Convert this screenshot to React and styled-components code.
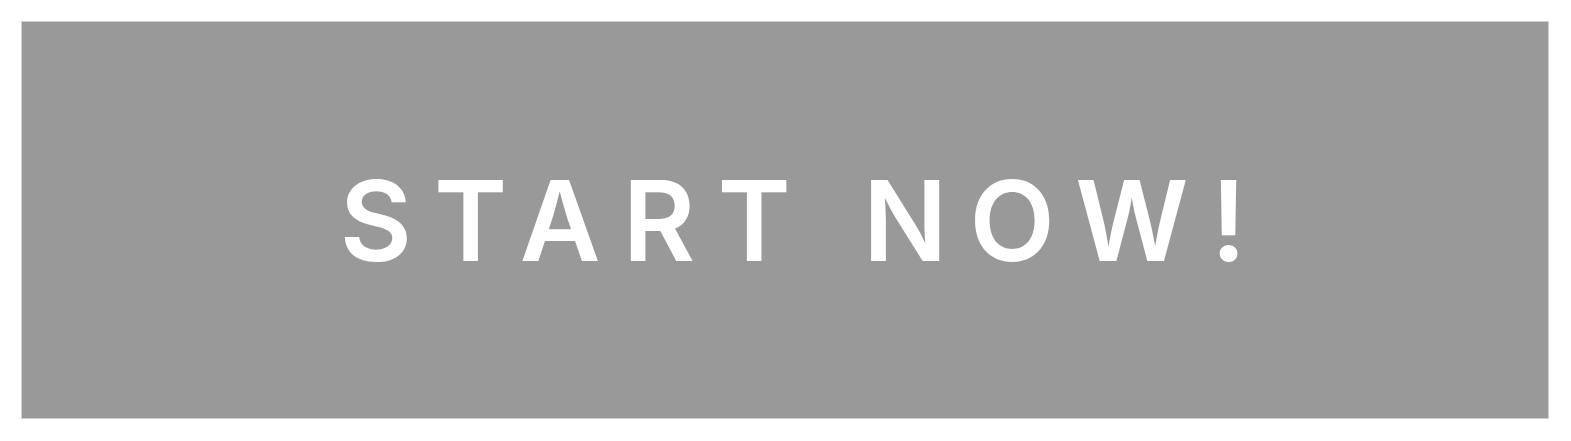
import React from 'react';
import styled, { createGlobalStyle } from 'styled-components';

const GlobalStyle = createGlobalStyle`
	html, body {
		margin: 0;
		padding: 0;
		background: #ffffff;
	}
`;

export default function App() {
	return (
		<>
			<GlobalStyle />
			<Page>
				<Banner>
					<CallToAction>START NOW!</CallToAction>
				</Banner>
			</Page>
		</>
	);
}

const Page = styled.div`
	padding: 21px 22px 22px 21px;
	width: 1571px;
	height: 441px;
	box-sizing: border-box;
`;

const Banner = styled.div`
	height: 100%;
	box-sizing: border-box;
	background: #999999;
	border: 1px solid #cfcfcf;
	display: flex;
	align-items: center;
	justify-content: center;
`;

const CallToAction = styled.div`
	font-family: 'Inter', 'Liberation Sans', sans-serif;
	font-weight: 600;
	font-size: 111px;
	line-height: 1;
	letter-spacing: 0.2em;
	margin-right: -0.2em;
	margin-left: 16px;
	color: #ffffff;
`;
